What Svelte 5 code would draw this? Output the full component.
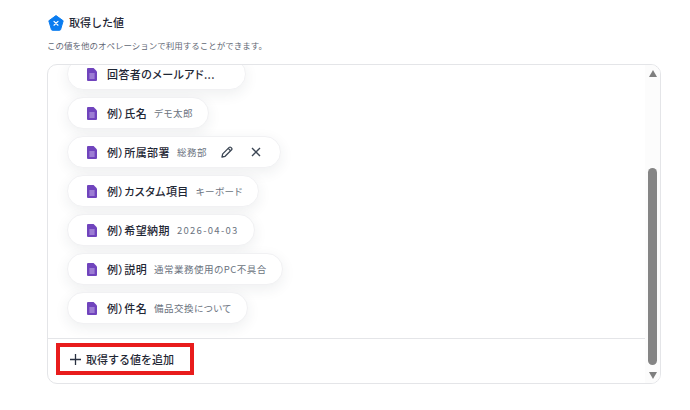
<script lang="ts">
    type Item = { label: string; value?: string; actions?: boolean; date?: boolean; wide?: boolean };

    const items: Item[] = [
        { label: "回答者のメールアド...", wide: true },
        { label: "例）氏名", value: "デモ太郎" },
        { label: "例）所属部署", value: "総務部", actions: true },
        { label: "例）カスタム項目", value: "キーボード" },
        { label: "例）希望納期", value: "2026-04-03", date: true },
        { label: "例）説明", value: "通常業務使用のPC不具合" },
        { label: "例）件名", value: "備品交換について" },
    ];
</script>

<div class="page">
    <div class="heading">
        <svg class="badge" width="16" height="16" viewBox="0 0 16 16">
            <path d="M8 .6 15.2 5.8 12.6 14.6a1 1 0 0 1-1 .7H4.4a1 1 0 0 1-1-.7L.8 5.8Z" fill="#0a7cf0" stroke="#0a7cf0" stroke-linejoin="round" />
            <path d="M6 6.4 10 10.2M10 6.4 6 10.2" stroke="#fff" stroke-width="1.2" stroke-linecap="round" />
        </svg>
        <h2>取得した値</h2>
    </div>
    <p class="hint">この値を他のオペレーションで利用することができます。</p>

    <div class="panel">
        <div class="main">
            <ul class="list">
                {#each items as item}
                    <li class="chip" class:wide={item.wide}>
                        <svg class="doc" width="10" height="13" viewBox="0 0 10 13">
                            <path d="M1 0H6.6L10 3.4V12a1 1 0 0 1-1 1H1a1 1 0 0 1-1-1V1a1 1 0 0 1 1-1Z" fill="#7044bd" />
                            <path d="M2.4 6H7.6M2.4 8H7.6M2.4 10H7.6" stroke="#c9b6ea" stroke-width="1" />
                        </svg>
                        <span class="label">{item.label}</span>
                        {#if item.value}
                            <span class="value" class:date={item.date}>{item.value}</span>
                        {/if}
                        {#if item.actions}
                            <span class="actions">
                                <svg width="14" height="14" viewBox="0 0 14 14" fill="none" stroke="#3c4654" stroke-width="1.3" stroke-linejoin="round">
                                    <path d="M2 12 2.7 8.9 9.2 2.4a1.2 1.2 0 0 1 1.7 0l.7.7a1.2 1.2 0 0 1 0 1.7L5.1 11.3Z" />
                                    <path d="M8.2 3.4 10.6 5.8" />
                                </svg>
                                <svg width="14" height="14" viewBox="0 0 14 14" fill="none" stroke="#3c4654" stroke-width="1.4">
                                    <path d="M3 3 11 11M11 3 3 11" />
                                </svg>
                            </span>
                        {/if}
                    </li>
                {/each}
            </ul>
        </div>
        <div class="footer">
            <button class="add">
                <svg width="11" height="11" viewBox="0 0 11 11" stroke="#283040" stroke-width="1.3">
                    <path d="M5.5 0V11M0 5.5H11" />
                </svg>
                取得する値を追加
            </button>
        </div>
        <div class="scrollbar">
            <span class="arrow up"></span>
            <span class="track"><span class="thumb"></span></span>
            <span class="arrow down"></span>
        </div>
    </div>
</div>

<style>
    :global(body) {
        background: #fff;
        font-family: "Noto Sans CJK JP", "Liberation Sans", sans-serif;
    }
    .page {
        width: 690px;
        height: 410px;
        box-sizing: border-box;
        padding: 14px 29px 0 47px;
        color: #1f2735;
    }
    .heading {
        display: flex;
        align-items: center;
        gap: 5px;
        margin-left: 1px;
        height: 18px;
    }
    h2 {
        margin: 0 0 2px;
        font-size: 11px;
        font-weight: 500;
        line-height: 18px;
    }
    .hint {
        margin: 6px 0 0;
        font-size: 8.5px;
        line-height: 14px;
        color: #5f6875;
    }
    .panel {
        position: relative;
        margin-top: 12px;
        height: 320px;
        box-sizing: border-box;
        border: 1px solid #e4e5e8;
        border-radius: 10px;
        overflow: hidden;
    }
    .main {
        height: 273px;
        overflow: hidden;
        border-bottom: 1px solid #e4e5e8;
        margin-right: 15px;
    }
    .list {
        list-style: none;
        margin: -7px 0 0;
        padding: 0 0 0 19px;
        display: flex;
        flex-direction: column;
        align-items: flex-start;
        gap: 7px;
    }
    .chip {
        height: 32px;
        box-sizing: border-box;
        display: flex;
        align-items: center;
        padding: 0 15px 0 19px;
        background: #fff;
        border-radius: 16px;
        border: 1px solid #f1f1f3;
        box-shadow: 0 4px 14px rgba(40, 48, 64, 0.08);
    }
    .chip.wide {
        padding-right: 30px;
    }
    .doc {
        flex: none;
        margin-right: 10px;
    }
    .label {
        font-size: 11px;
        font-weight: 500;
        letter-spacing: 0.4px;
        white-space: nowrap;
        font-feature-settings: "palt";
    }
    .value {
        margin-left: 7px;
        font-size: 9.5px;
        letter-spacing: 0.5px;
        color: #6b7380;
        white-space: nowrap;
        font-feature-settings: "palt";
    }
    .value.date {
        letter-spacing: 1.3px;
    }
    .actions {
        display: flex;
        gap: 15px;
        margin: 0 2px 0 13px;
    }
    .footer {
        padding: 4px 0 0 8px;
    }
    .add {
        display: flex;
        align-items: center;
        gap: 5px;
        width: 138px;
        height: 32px;
        box-sizing: border-box;
        padding: 0 0 0 10px;
        background: #fff;
        border: 4px solid #e81c1c;
        font-family: inherit;
        font-size: 11px;
        font-weight: 500;
        color: #1f2735;
    }
    .scrollbar {
        position: absolute;
        top: 0;
        right: 0;
        bottom: 0;
        width: 15px;
        display: flex;
        flex-direction: column;
        align-items: center;
        background: #fcfcfc;
    }
    .arrow {
        flex: none;
        width: 0;
        height: 0;
        border-left: 4.5px solid transparent;
        border-right: 4.5px solid transparent;
    }
    .arrow.up {
        margin-top: 5px;
        border-bottom: 7px solid #7f7f7f;
    }
    .arrow.down {
        margin-bottom: 4px;
        border-top: 7px solid #7f7f7f;
    }
    .track {
        flex: 1;
        width: 9px;
    }
    .thumb {
        display: block;
        width: 9px;
        margin-top: 91px;
        height: 197px;
        background: #858585;
        border-radius: 4.5px;
    }
</style>
